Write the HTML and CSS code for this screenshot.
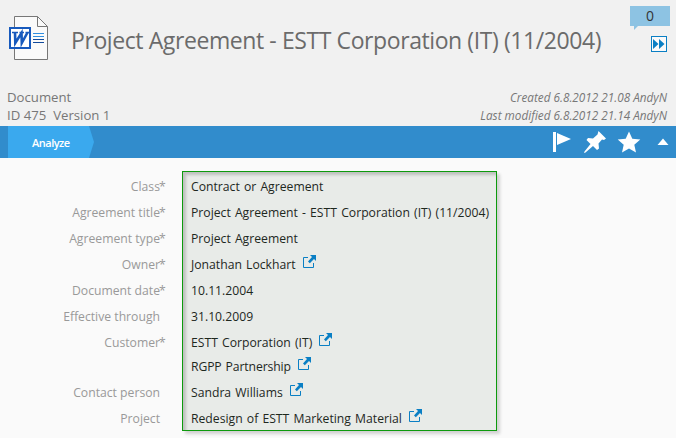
FILE: index.html
```html
<!DOCTYPE html>
<html lang="en">
<head>
<meta charset="utf-8">
<title>Project Agreement</title>
<link rel="stylesheet" href="styles.css">
</head>
<body>
<svg class="defs" width="0" height="0" aria-hidden="true">
  <symbol id="open" viewBox="0 0 13 13">
    <path d="M5 2.5H.5v10h10V8" fill="none" stroke="#0a7fc4"/>
    <path d="M7 0h6v6l-2-2-4.200 4.200-1.800-1.800L9 2z" fill="#0a7fc4"/>
  </symbol>
</svg>
<header class="header">
  <div class="top">
    <svg class="doc-icon" width="40" height="46" viewBox="0 0 40 46">
      <path d="M5.5.5h23l10 10v33h-33z" fill="#fafafa" stroke="#777"/>
      <path d="M28.500.5v10h10" fill="none" stroke="#777"/>
      <path d="M24 17.500h11M24 20.500h11" stroke="#2f8ee0"/>
      <path d="M24 23.500h11M24 26.500h11" stroke="#124a9c"/>
      <rect x="1" y="12" width="20" height="20" fill="#fff" stroke="#185abd" stroke-width="2"/>
      <path d="M3 16.500h6M10.500 16.500h4.500M16.500 16.500h4" fill="none" stroke="#185abd" stroke-width="1.500"/>
      <path d="M6 16.500l.3 10.500L12.500 17l.3 10L18.500 16.500" fill="none" stroke="#185abd" stroke-width="2.600"/>
    </svg>
    <h1 class="title">Project Agreement - ESTT Corporation (IT) (11/2004)</h1>
    <div class="tools">
      <div class="comments">0</div>
      <svg width="16" height="16" viewBox="0 0 16 16">
        <rect x=".5" y=".5" width="15" height="15" fill="#fafafa" stroke="#0a7fc4"/>
        <path d="M2 3v10l5.500-5zM8 3v10l5.500-5z" fill="#0a7fc4"/>
      </svg>
    </div>
  </div>
  <div class="meta">
    <div class="kind">Document<br>ID 475&nbsp; Version 1</div>
    <div class="history"><div class="created">Created 6.8.2012 21.08 AndyN</div><div class="modified">Last modified 6.8.2012 21.14 AndyN</div></div>
  </div>
</header>
<nav class="bar">
  <div class="tab">Analyze</div>
  <svg class="actions" width="120" height="32" viewBox="0 0 120 32" fill="#fff">
    <path d="M0 6h3v20H0zM4 7l14 6-14 6z"/>
    <path d="M45.500 5l7.500 7.500-2 1.500-2-.5-3.500 4 .5 5-2 1.500-4-4-7.500 6.500-1.500.5.500-1.500 6-7.500-4-4 1.500-2 5 .5 4.500-4z"/>
    <path d="M76 5.500l3.300 7.200 8 .8-6 5.300 1.700 7.700-7-4-7 4 1.700-7.700-6-5.300 8-.8z"/>
    <path d="M104.500 19l5.500-6.500 5.500 6.500z"/>
  </svg>
</nav>
<main class="card">
  <div class="labels">
    <div class="row">Class<span class="req">*</span></div>
    <div class="row">Agreement title<span class="req">*</span></div>
    <div class="row">Agreement type<span class="req">*</span></div>
    <div class="row">Owner<span class="req">*</span></div>
    <div class="row">Document date<span class="req">*</span></div>
    <div class="row">Effective through<span class="req"></span></div>
    <div class="row double">Customer<span class="req">*</span></div>
    <div class="row">Contact person<span class="req"></span></div>
    <div class="row">Project<span class="req"></span></div>
  </div>
  <div class="values">
    <div class="row">Contract or Agreement</div>
    <div class="row">Project Agreement - ESTT Corporation (IT) (11/2004)</div>
    <div class="row">Project Agreement</div>
    <div class="row">Jonathan Lockhart<svg class="link"><use href="#open"/></svg></div>
    <div class="row">10.11.2004</div>
    <div class="row">31.10.2009</div>
    <div class="row double">
      <div class="line">ESTT Corporation (IT)<svg class="link"><use href="#open"/></svg></div>
      <div class="line tight">RGPP Partnership<svg class="link"><use href="#open"/></svg></div>
    </div>
    <div class="row">Sandra Williams<svg class="link"><use href="#open"/></svg></div>
    <div class="row">Redesign of ESTT Marketing Material<svg class="link"><use href="#open"/></svg></div>
  </div>
</main>
</body>
</html>
```
FILE: styles.css
```css
* { box-sizing: border-box; }
body {
  margin: 0;
  width: 676px;
  height: 438px;
  overflow: hidden;
  background: #fafafa;
  font: 12.2px/26px "Open Sans", "Noto Sans", sans-serif;
}
.defs { position: absolute; }
.header {
  height: 126px;
  background: #f1f1f1;
  color: #777;
}
.top { display: flex; height: 88px; padding-left: 9px; }
.doc-icon { margin-top: 16px; flex: none; }
.title {
  margin: 22px 0 0 22px;
  font-size: 23px;
  letter-spacing: -.41px;
  line-height: 36px;
  font-weight: 400;
  color: #6b6b6b;
  white-space: nowrap;
  flex: 1;
  min-width: 0;
}
.tools {
  flex: none;
  width: 46px;
  display: flex;
  flex-direction: column;
  align-items: flex-end;
  padding: 6px 6px 0 0;
}
.tools svg { margin: 10px 3px 0 0; }
.comments {
  position: relative;
  width: 40px;
  height: 20px;
  background: #8dc3e3;
  color: #333;
  font-size: 14px;
  line-height: 20px;
  text-align: center;
}
.comments::after {
  content: "";
  position: absolute;
  left: 4px;
  top: 20px;
  border-top: 4px solid #8dc3e3;
  border-right: 4px solid transparent;
}
.meta {
  display: flex;
  justify-content: space-between;
  padding: 0 9px 0 7px;
  line-height: 18px;
}
.kind { font-size: 13.2px; }
.history { font-size: 11.75px; font-style: italic; text-align: right; }
.bar {
  display: flex;
  justify-content: space-between;
  height: 32px;
  padding: 0 3px 0 8px;
  background: #318ccc;
}
.tab {
  width: 86px;
  padding-left: 24px;
  background: #3aa9ee;
  clip-path: polygon(0 0, 81px 0, 100% 50%, 81px 100%, 0 100%);
  color: #fff;
  font-size: 11px;
  font-weight: 600;
  letter-spacing: -.5px;
  line-height: 33px;
}
.card { display: flex; padding-top: 13px; }
.labels {
  width: 182px;
  padding: 3px 16px 0 0;
  text-align: right;
  color: #999;
}
.req { display: inline-block; width: 6px; text-align: left; text-indent: -1px; }
.row { height: 26px; white-space: nowrap; }
.double { height: 50px; }
.values {
  width: 315px;
  height: 260px;
  padding: 2px 0 0 8px;
  border: 1px solid #0d9a0d;
  background: #e8ebe8;
  box-shadow: 3px 3px 3px rgba(0, 0, 0, .16), inset 3px 3px 3px rgba(0, 0, 0, .18);
  color: #1e281e;
  word-spacing: 1px;
}
.values .double { padding-top: 1px; }
.line { height: 24px; line-height: 24px; }
.tight { letter-spacing: -.12px; }
.link { width: 13px; height: 13px; margin-left: 7px; vertical-align: 1px; }
```
